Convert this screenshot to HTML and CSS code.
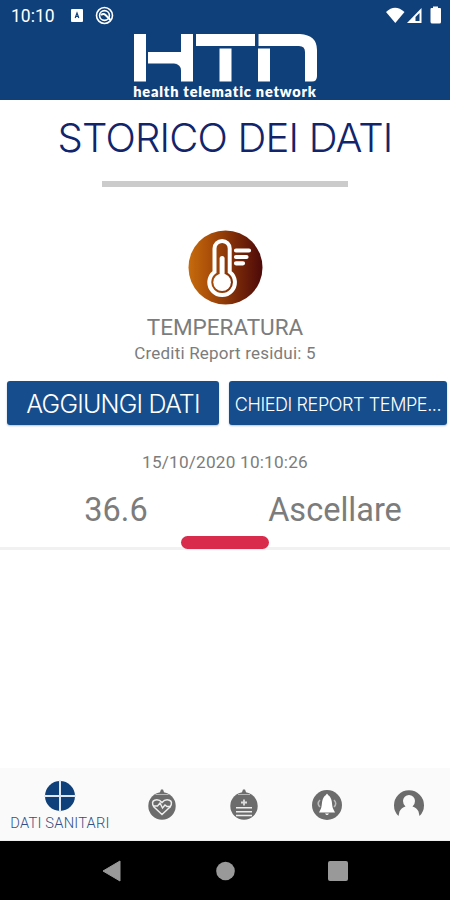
FILE: index.html
```html
<!DOCTYPE html>
<html lang="it">
<head>
<meta charset="utf-8">
<title>Storico dei dati</title>
<link rel="stylesheet" href="styles.css">
</head>
<body>
<div class="screen">
  <header class="header">
    <div class="status">
      <span class="clock">10:10</span>
      <svg class="status-left" width="44" height="20" viewBox="70 6 44 20">
        <rect x="71" y="9" width="12" height="13" rx="1" fill="#fff"/>
        <path d="M75.2 18 77 13 78.800 18M75.900 16.500H78.100" fill="none" stroke="#10407a" stroke-width="1.200"/>
        <circle cx="104.500" cy="15.500" r="8" fill="none" stroke="#fff" stroke-width="1.600"/>
        <circle cx="104.500" cy="15.500" r="4.900" fill="none" stroke="#fff" stroke-width="1.600"/>
        <path d="M101 15q2.500-2 4.500 0l5 5" fill="none" stroke="#fff" stroke-width="2"/>
      </svg>
      <svg class="status-right" width="60" height="20" viewBox="384 5 60 20">
        <path d="M386 12q9-8.500 18.500 0L395.300 23Z" fill="#fff"/>
        <path d="M407 23 421.500 8V23Z" fill="#fff"/>
        <path d="M415.500 21V17L419.500 13V21Z" fill="#10407a"/>
        <path d="M433 8v-1.500h5V8h2q1 0 1 1V22q0 1.500-1.500 1.500h-7q-2 0-2-1.500V9q0-1 1-1Z" fill="#fff"/>
      </svg>
    </div>
    <svg class="logo" width="184" height="48" viewBox="0 0 184 48">
      <g fill="#fff">
        <rect x="1" y="0" width="12" height="47.500"/>
        <rect x="15" y="18" width="33" height="11.500"/>
        <rect x="48" y="0" width="12" height="47.500"/>
        <path d="M41 29.500q7 1 7 7h1v-8Z"/>
        <rect x="63" y="0" width="59" height="12"/>
        <rect x="86.500" y="14.500" width="12" height="33"/>
        <rect x="125" y="14.500" width="12" height="33"/>
        <path d="M125.500 0H167Q184 1 184 16V42Q184 47.500 179 47.500H172V18Q172 12 166 12H125.500Z"/>
      </g>
    </svg>
    <div class="tagline">health telematic network</div>
  </header>
  <main class="content">
    <h1 class="title">STORICO DEI DATI</h1>
    <div class="divider"></div>
    <svg class="thermo" width="76" height="76" viewBox="187 229 76 76">
      <defs><linearGradient id="heat"><stop offset="0" stop-color="#c66b0c"/><stop offset=".3" stop-color="#a84d08"/><stop offset=".65" stop-color="#792908"/><stop offset="1" stop-color="#4d0909"/></linearGradient></defs>
      <circle cx="225.500" cy="266.500" r="37" fill="url(#heat)"/>
      <path d="M214.500 271V247.500a7.600 7.600 0 0 1 15.200 0V271a12.800 12.800 0 1 1-15.200 0Z" fill="none" stroke="#fff" stroke-width="4"/>
      <path d="M222.100 257.500V277" stroke="#fff" stroke-width="5" stroke-linecap="round"/>
      <circle cx="222.100" cy="281.300" r="8.800" fill="#fff"/>
      <path d="M236 249.500H249M236 256H246.500M236 262.300H243" stroke="#fff" stroke-width="4.200" stroke-linecap="round"/>
    </svg>
    <div class="measure">TEMPERATURA</div>
    <div class="credits">Crediti Report residui: 5</div>
    <div class="actions">
      <button class="btn add"><span>AGGIUNGI DATI</span></button>
      <button class="btn report"><span>CHIEDI REPORT TEMPE...</span></button>
    </div>
    <section class="record">
      <div class="date">15/10/2020 10:10:26</div>
      <div class="values"><span class="reading">36.6</span><span class="place">Ascellare</span></div>
      <div class="level"></div>
    </section>
  </main>
  <nav class="tabs">
    <div class="tab active">
      <svg width="32" height="32" viewBox="0 0 32 32"><circle cx="16" cy="16" r="15" fill="#10407a"/><path d="M16 0V32M0 16H32" stroke="#dfe7f2" stroke-width="2"/></svg>
      <span>DATI SANITARI</span>
    </div>
    <div class="tab">
      <svg width="32" height="34" viewBox="0 0 32 34"><circle cx="16" cy="18" r="13.700" fill="#6c6c6c"/><path d="M15 1.500h2l1.500 4h-5z" fill="#6c6c6c"/><path d="M9.500 6.500H22.500" stroke="#ccc" stroke-width=".8"/><path d="M16 26.500 8 19C3 11.500 12 10 16 14.500c4-4.500 13-3 8 4.500Z" fill="none" stroke="#eee" stroke-width="1.500"/><path d="M7 18h4.500l2.500-3 2.500 5 2.500-3 2 1.500h4" fill="none" stroke="#eee" stroke-width="1.400"/></svg>
    </div>
    <div class="tab">
      <svg width="32" height="34" viewBox="0 0 32 34"><circle cx="16" cy="18" r="13.700" fill="#6c6c6c"/><path d="M15 1.500h2l1.500 4h-5z" fill="#6c6c6c"/><path d="M10 6.500H22" stroke="#ccc" stroke-width=".8"/><path d="M16 11.500v6M13 14.500h6" stroke="#ddd" stroke-width="1.800"/><path d="M8 19.800H24M8 23.700H24M8 27.500H24" stroke="#eee" stroke-width="1.400"/></svg>
    </div>
    <div class="tab">
      <svg width="32" height="34" viewBox="0 0 32 34"><circle cx="16" cy="17" r="15" fill="#6c6c6c"/><path d="M15 7Q16 4.500 17 7C22 10 20.500 17 22 20.500l2 4H8l2-4C11.500 17 10 10 15 7ZM14 25.500h4q-2 3-4 0Z" fill="#fff"/><path d="M9 12Q5.500 15.500 9 19M23 12Q26.500 15.500 23 19" fill="none" stroke="#bbb" stroke-width="1.500"/></svg>
    </div>
    <div class="tab">
      <svg width="32" height="34" viewBox="0 0 32 34"><path d="M5.500 28A15 15 0 1 1 26.500 28L25.500 23.500Q23.500 19.500 19.500 18.500Q22 16.500 22 13A6 6 0 0 0 10 13Q10 16.500 12.500 18.500Q8.500 19.500 6.500 23.500Z" fill="#6c6c6c"/></svg>
    </div>
  </nav>
  <footer class="system">
    <svg width="20" height="22" viewBox="0 0 20 22"><path d="M1 11 18 1V21Z" fill="#999" stroke="#999" stroke-linejoin="round"/></svg>
    <svg width="20" height="20" viewBox="0 0 20 20"><circle cx="10.500" cy="10" r="9.300" fill="#999"/></svg>
    <svg width="20" height="20" viewBox="0 0 20 20"><rect width="20" height="20" rx="2" fill="#999"/></svg>
  </footer>
</div>
</body>
</html>
```
FILE: styles.css
```css
* { box-sizing: border-box; }
body { margin: 0; }
.screen {
  width: 450px;
  height: 900px;
  display: flex;
  flex-direction: column;
  background: #fff;
  font-family: Roboto, "Liberation Sans", sans-serif;
  color: #7c7c7c;
  white-space: nowrap;
  overflow: hidden;
}
.header {
  height: 100px;
  background: #10407a;
  color: #fff;
  display: flex;
  flex-direction: column;
  align-items: center;
}
.status {
  width: 450px;
  height: 33.500px;
  flex: none;
  display: flex;
  align-items: flex-start;
  padding: 5px 6px 0 11px;
}
.clock { width: 59px; font-size: 17.500px; line-height: 23px; }
.status-left { margin-top: 1px; }
.status-right { margin-left: auto; }
.logo { flex: none; }
.tagline {
  font-family: Lato, "Open Sans", sans-serif;
  font-weight: 800;
  font-size: 14.500px;
  line-height: 20px;
  letter-spacing: .8px;
}
.content { flex: 1; display: flex; flex-direction: column; align-items: center; }
.title {
  margin: 14px 0 0;
  font-family: Inter, sans-serif;
  font-size: 40px;
  line-height: 48px;
  font-weight: 300;
  letter-spacing: -.8px;
  color: #12256c;
}
.divider { width: 246px; height: 6px; margin-top: 19px; background: #cbcbcb; }
.thermo { margin-top: 43px; flex: none; }
.measure { margin-top: 8px; font-size: 22.500px; line-height: 26px; }
.credits { margin-top: 3px; font-size: 17px; line-height: 20px; letter-spacing: .2px; }
.actions { width: 450px; display: flex; gap: 10px; padding: 0 3px 0 7px; margin-top: 18px; }
.btn {
  height: 44px;
  padding: 2px 0 0;
  border: 0;
  border-radius: 3px;
  background: #164d8d;
  color: #fff;
  font-family: Inter, sans-serif;
  font-weight: 300;
  box-shadow: 0 1px 2px #b8c3d2;
}
.add { width: 212px; font-size: 25px; letter-spacing: -.8px; }
.report { width: 218px; font-size: 18px; letter-spacing: -.4px; }
.record {
  width: 450px;
  height: 125px;
  border-bottom: 3px solid #f1f1f1;
  display: flex;
  flex-direction: column;
  align-items: center;
}
.date { margin-top: 27px; font-size: 17.200px; line-height: 20px; letter-spacing: .2px; }
.values { width: 450px; display: grid; grid-template-columns: 232px 206px; text-align: center; margin-top: 18px; font-size: 32.500px; line-height: 40px; }
.level { width: 88px; height: 13px; border-radius: 7px; background: #d92b4b; margin-top: 6px; flex: none; }
.tabs {
  height: 73px;
  background: #fafafa;
  display: grid;
  grid-template-columns: 120px 83px 82px 83px 82px;
  border-bottom: 1px solid #eee;
}
.tab { display: flex; justify-content: center; padding-top: 20px; }
.active { flex-direction: column; align-items: center; justify-content: flex-start; padding-top: 12px; color: #304f86; }
.active span { font-size: 14.700px; line-height: 18px; margin-top: 2px; font-weight: 300; letter-spacing: .2px; }
.system {
  height: 59px;
  background: #000;
  display: flex;
  justify-content: center;
  align-items: center;
  gap: 93px;
}
```
